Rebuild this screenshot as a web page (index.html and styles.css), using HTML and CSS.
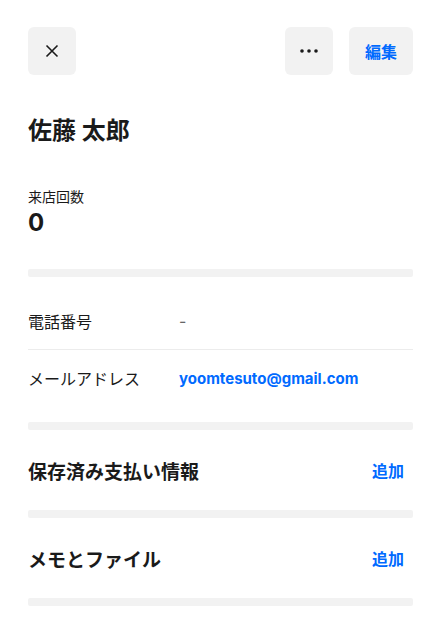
FILE: index.html
```html
<!DOCTYPE html>
<html lang="ja">
<head>
    <meta charset="UTF-8">
    <meta name="viewport" content="width=device-width, initial-scale=1.0">
    <title>顧客情報 - 佐藤 太郎</title>
    <link rel="stylesheet" href="styles.css">
</head>
<body>
    <div class="page">
        <div class="toolbar">
            <button class="icon-btn" aria-label="閉じる">
                <svg width="14" height="14" viewBox="0 0 14 14">
                    <path d="M1.5 1.5 L12.5 12.5 M12.5 1.5 L1.5 12.5" stroke="#1a1a1a" stroke-width="1.6" fill="none"/>
                </svg>
            </button>
            <div class="toolbar-right">
                <button class="icon-btn" aria-label="その他">
                    <svg width="18" height="4" viewBox="0 0 18 4">
                        <circle cx="2" cy="2" r="1.8" fill="#1a1a1a"/>
                        <circle cx="9" cy="2" r="1.8" fill="#1a1a1a"/>
                        <circle cx="16" cy="2" r="1.8" fill="#1a1a1a"/>
                    </svg>
                </button>
                <button class="text-btn">編集</button>
            </div>
        </div>

        <h1 class="customer-name">佐藤 太郎</h1>

        <div class="stat">
            <div class="stat-label">来店回数</div>
            <div class="stat-value">0</div>
        </div>

        <div class="divider"></div>

        <div class="info-list">
            <div class="info-row">
                <div class="info-label">電話番号</div>
                <div class="info-value muted">-</div>
            </div>
            <div class="info-row">
                <div class="info-label">メールアドレス</div>
                <div class="info-value link">yoomtesuto@gmail.com</div>
            </div>
        </div>

        <div class="divider"></div>

        <div class="section">
            <h2 class="section-title">保存済み支払い情報</h2>
            <button class="add-btn">追加</button>
        </div>

        <div class="divider"></div>

        <div class="section">
            <h2 class="section-title">メモとファイル</h2>
            <button class="add-btn">追加</button>
        </div>

        <div class="divider"></div>
    </div>
</body>
</html>
```

FILE: styles.css
```css
body {
    margin: 0;
    font-family: Inter, "Noto Sans CJK JP", sans-serif;
    color: #1a1a1a;
    background: #fff;
}
.page {
    padding: 27px 33px 0 28px;
}
.toolbar {
    display: flex;
    justify-content: space-between;
    align-items: center;
}
.toolbar-right {
    display: flex;
    gap: 16px;
}
button {
    font-family: inherit;
    border: none;
    cursor: pointer;
}
.icon-btn {
    width: 48px;
    height: 48px;
    border-radius: 6px;
    background: #f2f2f2;
    display: flex;
    align-items: center;
    justify-content: center;
    padding: 0;
}
.text-btn {
    width: 64px;
    height: 48px;
    border-radius: 6px;
    background: #f2f2f2;
    color: #006aff;
    font-size: 16px;
    font-weight: 700;
    padding: 0;
}
.customer-name {
    margin: 40px 0 0 0;
    font-size: 24px;
    line-height: 32px;
    font-weight: 700;
}
.stat {
    margin-top: 40px;
}
.stat-label {
    font-size: 14px;
    line-height: 20px;
}
.stat-value {
    margin-top: 0;
    font-size: 24px;
    line-height: 32px;
    font-weight: 700;
}
.divider {
    height: 8px;
    background: #f2f2f2;
    border-radius: 2px;
}
.stat + .divider {
    margin-top: 30px;
}
.info-list {
    padding: 16px 0;
}
.info-row {
    display: flex;
    align-items: center;
    height: 56px;
    font-size: 16px;
}
.info-row + .info-row {
    border-top: 1px solid #ececec;
}
.info-label {
    width: 151px;
}
.info-value.muted {
    color: #666;
}
.info-value.link {
    color: #006aff;
    font-size: 15px;
    font-weight: 700;
}
.section {
    display: flex;
    justify-content: space-between;
    align-items: center;
    height: 80px;
}
.section-title {
    margin: 0;
    font-size: 19px;
    font-weight: 700;
}
.add-btn {
    background: none;
    color: #006aff;
    font-size: 16px;
    font-weight: 700;
    padding: 8px 9px;
}
```
